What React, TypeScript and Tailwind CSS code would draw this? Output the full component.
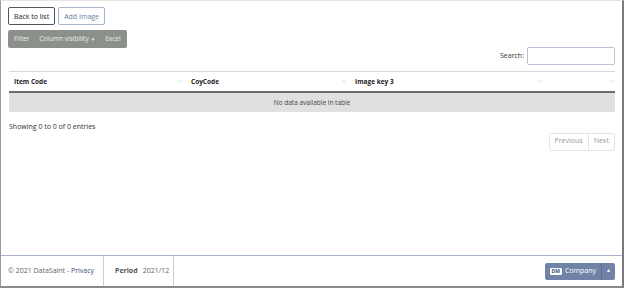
import React from "react";

function SortIcon() {
  return <span className="text-[6px] text-[#c8c8c8] tracking-[-1px]">↑↓</span>;
}

export default function App() {
  return (
    <div
      className="w-[624px] h-[288px] bg-white border-l border-r-2 border-b-2 border-t border-l-[#9a9a9a] border-r-[#7a7a7a] border-b-[#8a8a8a] border-t-[#e4e4e4] flex flex-col text-[#333]"
      style={{ fontFamily: '"Open Sans", "Segoe UI", sans-serif' }}
    >
      <div className="flex-1 px-[7px] pt-[6px] flex flex-col">
        <div className="flex gap-[3px]">
          <button className="h-[18px] px-[5px] border border-[#555] rounded-[2px] text-[7px] text-[#222] leading-none">Back to list</button>
          <button className="h-[18px] px-[5px] border border-[#a9b5cc] rounded-[2px] text-[7px] text-[#6e80a3] leading-none">Add Image</button>
        </div>
        <div className="mt-[5px] flex">
          <div className="h-[18px] bg-[#8b908a] rounded-[2px] flex items-center text-[6.5px] text-[#eef0ec] px-[6px] gap-[10px]">
            <span>Filter</span>
            <span className="flex items-center gap-[2px]">Column visibility <span className="text-[4.5px]">▼</span></span>
            <span>Excel</span>
          </div>
        </div>
        <div className="flex justify-end items-center gap-[3px] -mt-[1px]">
          <span className="text-[7px]">Search:</span>
          <div className="w-[88px] h-[18px] border border-[#b8c2d4] rounded-[2px]" />
        </div>
        <div className="mt-[6px] border-t border-[#d8d8d8] ml-[1px]">
          <div className="flex h-[21px] items-center border-b-2 border-[#6e6e6e] text-[6.5px] font-bold text-[#222]">
            <div className="w-[176px] pl-[5px] flex justify-between pr-[4px]"><span>Item Code</span><SortIcon /></div>
            <div className="w-[164px] pl-[6px] flex justify-between pr-[4px]"><span>CoyCode</span><SortIcon /></div>
            <div className="w-[196px] pl-[6px] flex justify-between pr-[4px]"><span>Image key 3</span><SortIcon /></div>
            <div className="flex-1 flex justify-end pr-[2px]"><SortIcon /></div>
          </div>
          <div className="h-[19px] bg-[#e0e0e0] flex items-center justify-center text-[6.5px] text-[#444]">No data available in table</div>
        </div>
        <div className="mt-[10px] text-[7px] text-[#333] pl-[1px]">Showing 0 to 0 of 0 entries</div>
        <div className="flex justify-end mt-0">
          <div className="flex h-[18px] border border-[#e4e4e4] rounded-[2px] text-[7px] text-[#999]">
            <span className="px-[5px] flex items-center border-r border-[#e4e4e4]">Previous</span>
            <span className="px-[5px] flex items-center">Next</span>
          </div>
        </div>
      </div>
      <div className="h-[31px] border-t border-[#a9b4c8] flex items-stretch text-[7px]">
        <div className="w-[103px] pl-[7px] flex items-center border-r border-[#c8cfdb] text-[#666]">
          © 2021 DataSaint -&nbsp;<span className="text-[#3b4a78]">Privacy</span>
        </div>
        <div className="pl-[11px] pr-[4px] flex items-center gap-[5px] border-r border-[#c8cfdb]">
          <span className="font-bold text-[#555]">Period</span><span className="text-[#666]">2021/12</span>
        </div>
        <div className="flex-1 flex items-center justify-end pr-[7px]">
          <div className="flex h-[17px] rounded-[2px] bg-[#7083a6] text-white">
            <div className="flex items-center gap-[3px] pl-[5px] pr-[5px] text-[7px]">
              <span className="bg-white text-[#3b4a6a] text-[5px] font-bold px-[2px] leading-[7px] rounded-[1px]">DM</span>
              <span>Company</span>
            </div>
            <div className="w-[14px] border-l border-[#5d6f91] flex items-center justify-center text-[5px]">▲</div>
          </div>
        </div>
      </div>
    </div>
  );
}
